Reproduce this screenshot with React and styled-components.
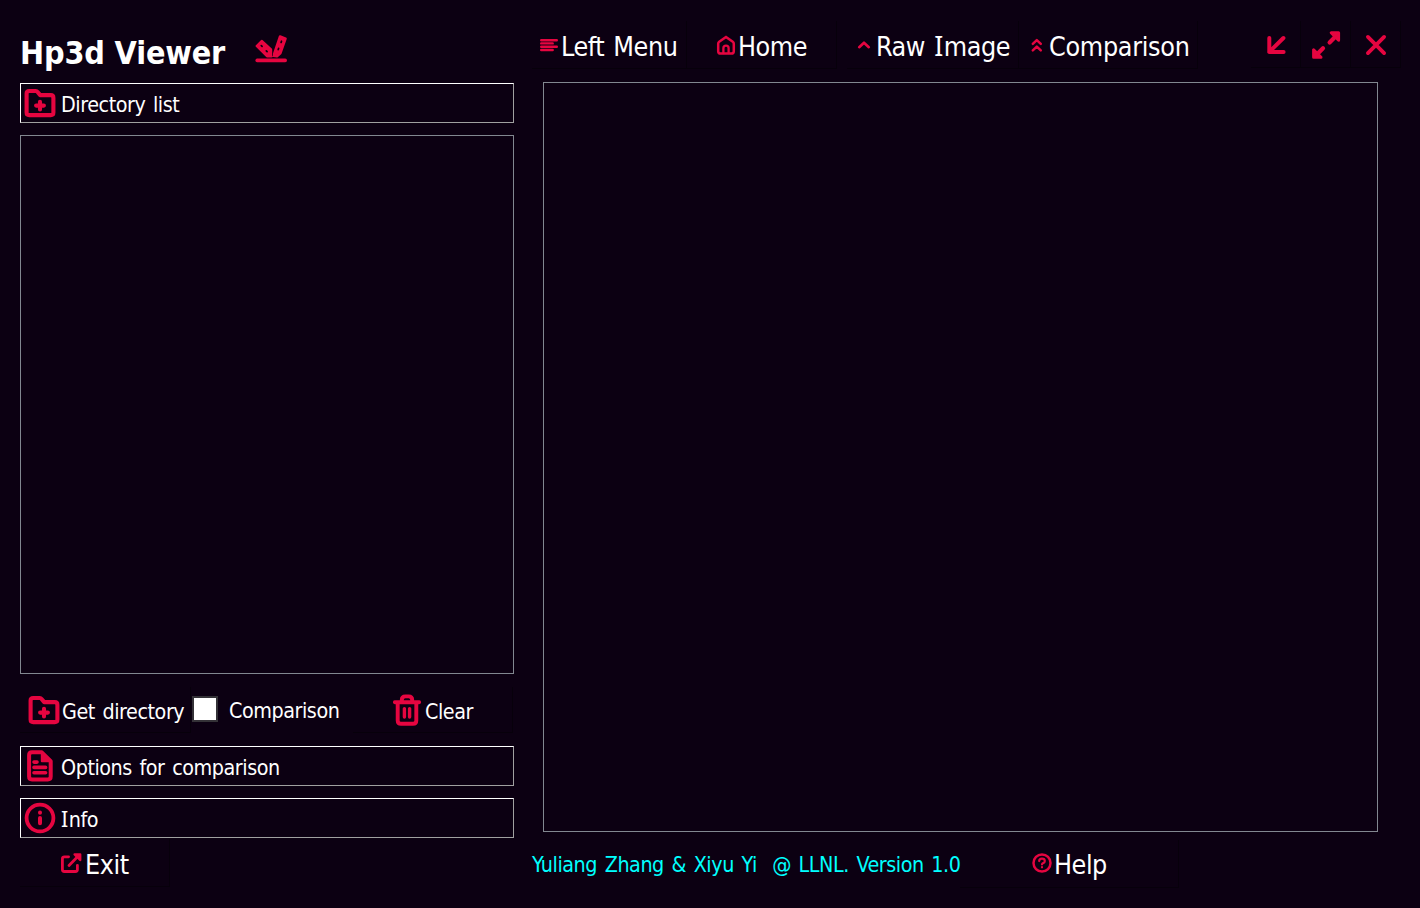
import React from "react";
import styled, { createGlobalStyle } from "styled-components";

const BG = "#0c0012";
const RED = "#e60540";

const GlobalStyle = createGlobalStyle`
  * { box-sizing: border-box; }
  body { margin: 0; background: ${BG}; overflow: hidden; }
`;

const Window = styled.div`
  width: 1420px;
  height: 908px;
  display: flex;
  background: ${BG};
  color: #fff;
  font-family: "DejaVu Sans Condensed", "DejaVu Sans", sans-serif;
  font-stretch: condensed;
  font-size: 21.33px;
`;

const Sidebar = styled.aside`
  width: 494px;
  margin-left: 20px;
  display: flex;
  flex-direction: column;
`;

const Brand = styled.header`
  height: 83px;
  flex: none;
  display: flex;
  align-items: flex-start;
  padding-top: 34px;
`;

const Title = styled.h1`
  width: 234px;
  margin: 0;
  padding-top: 3px;
  font-size: 32px;
  line-height: 33px;
  font-weight: 700;
  letter-spacing: -0.15px;
  white-space: nowrap;
`;

const Tab = styled.button`
  height: 40px;
  flex: none;
  display: flex;
  align-items: center;
  gap: 5px;
  margin: 0 0 ${(p) => (p.$last ? 0 : 12)}px;
  padding: 0 0 0 3px;
  background: none;
  color: inherit;
  font: inherit;
  border: 1px solid;
  border-color: #fff #a0a0a0 #a0a0a0 #fff;
`;

const FileList = styled.div`
  height: 539px;
  flex: none;
  border: 1px solid #828790;
`;

const Actions = styled.div`
  height: 72px;
  flex: none;
  display: flex;
  align-items: flex-start;
  padding-top: 13px;
`;

const ExitRow = styled.div`
  flex: none;
  display: flex;
  padding-top: 1px;
`;

const FlatButton = styled.button`
  width: ${(p) => p.$w}px;
  height: ${(p) => p.$h || 48}px;
  flex: none;
  display: flex;
  align-items: center;
  gap: ${(p) => p.$gap || 0}px;
  margin: 0 0 0 ${(p) => p.$before || 0}px;
  padding: 0 0 0 ${(p) => p.$inset || 0}px;
  background: none;
  color: inherit;
  font: inherit;
  font-size: ${(p) => (p.$large ? 26.67 : 21.33)}px;
  border: 0;
  border-right: 1px solid #07000b;
  border-bottom: 1px solid #07000b;
`;

const Label = styled.span`
  line-height: 30px;
  padding-top: ${(p) => p.$drop ?? 3}px;
  letter-spacing: ${(p) => p.$track ?? -0.45}px;
  word-spacing: 2px;
  white-space: pre;
`;

const SerifI = styled.span`
  font-family: "Noto Sans", sans-serif;
  line-height: 1;
  margin-right: 1px;
`;

const CheckField = styled.label`
  display: flex;
  align-items: center;
  gap: 11px;
  height: 44px;
  width: 161px;
  margin-left: 1px;
`;

const CheckBox = styled.span`
  width: 26px;
  height: 26px;
  background: #fff;
  border: 2px solid #343237;
`;

const Main = styled.main`
  width: 868px;
  margin-left: 18px;
  display: flex;
  flex-direction: column;
`;

const Nav = styled.nav`
  height: 82px;
  display: flex;
  padding-top: 21px;
`;

const Viewer = styled.section`
  width: 835px;
  height: 750px;
  margin-left: 11px;
  border: 1px solid #828790;
`;

const Footer = styled.footer`
  display: flex;
  margin-top: 7px;
  height: 49px;
  align-items: center;
`;

const Credit = styled.div`
  width: 428px;
  padding-top: 2px;
  color: #00ffff;
`;

const Drawing = styled.svg`
  flex: none;
  display: block;
  fill: none;
  stroke: ${RED};
  stroke-width: ${(p) => p.$weight};
  stroke-linecap: round;
  stroke-linejoin: round;
`;

function Icon({ w, h, weight, children }) {
  return (
    <Drawing width={w} height={h} viewBox={`0 0 ${w} ${h}`} $weight={weight}>
      {children}
    </Drawing>
  );
}

const LogoIcon = () => (
  <Icon w={34} h={30} weight={3.2}>
    <path d="M3.2 26.4h28" strokeWidth="3.6" />
    <path d="M2.7 12l5-5L17.5 15.8l0 6.4H13z" fill={RED} strokeWidth="2.4" />
    <path d="M26 2.4l5.6 2.2-5.2 14.8-3.4 2.8-3.6-.4z" fill={RED} strokeWidth="2.4" />
    <path d="M7.3 11.6l.8.8M12.3 16.8l.8.8M27.5 7.2l-.4 1.2M24.6 14.4l-.4 1.2" stroke={BG} strokeWidth="1.7" />
    <path d="M18.5 13v8.5" stroke={BG} strokeWidth=".7" />
  </Icon>
);

const FolderIcon = () => (
  <Icon w={32} h={30} weight={4.1}>
    <path d="M5.2 3h6.6q1.1 0 1.8.9l2.6 3.2h10.6q2.6 0 2.6 2.6v14.8q0 2.6-2.6 2.6H5.2q-2.6 0-2.6-2.6V5.6Q2.6 3 5.2 3z" />
    <path d="M16 13.7v7.8M12.1 17.6h7.8" />
  </Icon>
);

const TrashIcon = () => (
  <Icon w={28} h={32} weight={3.9}>
    <path d="M1.9 8.2h24.2M8.8 7.5V6q0-3.6 3.6-3.6h3.2q3.6 0 3.6 3.6v1.5M4.7 8.5v18q0 3.3 3.3 3.3h12q3.3 0 3.3-3.3v-18" />
    <path d="M11.4 14.6v8.4M16.6 14.6v8.4" strokeWidth="3.4" />
  </Icon>
);

const DocumentIcon = () => (
  <Icon w={32} h={32} weight={4}>
    <path d="M8 2.3h9.8l8.9 8.8v15.5q0 2.9-2.9 2.9H8q-2.9 0-2.9-2.9V5.2q0-2.9 2.9-2.9z" />
    <path d="M17.8 4v7.3h7.6z" fill={RED} strokeWidth="2" />
    <path d="M10 12.1h3M10 17.4h11.6M10 22.8h11.6" strokeWidth="3.6" />
  </Icon>
);

const InfoIcon = () => (
  <Icon w={32} h={32} weight={3.8}>
    <circle cx="16" cy="16" r="13.4" />
    <path d="M16 15.9v5.3M16 10.6v.1" strokeWidth="4" />
  </Icon>
);

const ExitIcon = () => (
  <Icon w={22} h={22} weight={2.8}>
    <path d="M8.6 4.8H4.4q-2 0-2 2v10.7q0 2 2 2h11q2 0 2-2v-4.2" />
    <path d="M9 13.5L18 4.2" />
    <path d="M14.6 2.4h5.6v5.6z" fill={RED} strokeWidth="2.4" />
  </Icon>
);

const HelpIcon = () => (
  <Icon w={20} h={20} weight={2.5}>
    <circle cx="10" cy="10" r="8.5" />
    <path d="M7.2 8.1q0-2.4 2.8-2.4t2.8 2.3q0 1.5-1.6 2.1-1.2.5-1.2 1.4M10 14.2v.1" strokeWidth="2.2" />
  </Icon>
);

const MenuIcon = () => (
  <Icon w={20} h={20} weight={2.4}>
    <path d="M2.2 5.2h15.6M2.2 8.4h11.5M2.2 11.7h15.6M2.2 15h11.5" />
  </Icon>
);

const HomeIcon = () => (
  <Icon w={20} h={20} weight={2.5}>
    <path d="M10 1.9L3.2 6.8q-1 .7-1 2v7.4q0 2.4 2.4 2.4h10.8q2.4 0 2.4-2.4V8.8q0-1.3-1-2z" />
    <path d="M7.4 18v-4.8q0-2.5 2.6-2.5t2.6 2.5V18" strokeWidth="2.3" />
  </Icon>
);

const ChevronIcon = () => (
  <Icon w={14} h={20} weight={2.6}>
    <path d="M2.2 12.2L7 7.7l4.8 4.5" />
  </Icon>
);

const DoubleChevronIcon = () => (
  <Icon w={14} h={20} weight={2.5}>
    <path d="M2.8 8.9l4-3.8 4 3.8M2.8 15.4l4-3.8 4 3.8" />
  </Icon>
);

const MinimizeIcon = () => (
  <Icon w={30} h={30} weight={4}>
    <path d="M22.4 9L8.3 22.9M8.3 9v13.9H22.6" />
  </Icon>
);

const ExpandIcon = () => (
  <Icon w={30} h={30} weight={4.2}>
    <path d="M18.6 13.4L26 6M12 19.2L4.8 26.4" />
    <path d="M20.2 3.8h7.4v7.4zM2.6 20.8v7.4H10z" fill={RED} strokeWidth="3" />
  </Icon>
);

const CloseIcon = () => (
  <Icon w={30} h={30} weight={3.8}>
    <path d="M6.9 7.9l16.2 16.2M23.1 7.9L6.9 24.1" />
  </Icon>
);

export default function App() {
  return (
    <>
      <GlobalStyle />
      <Window>
        <Sidebar>
          <Brand>
            <Title>Hp3d Viewer</Title>
            <LogoIcon />
          </Brand>
          <Tab>
            <FolderIcon />
            <Label>Directory list</Label>
          </Tab>
          <FileList />
          <Actions>
            <FlatButton $w={171} $h={46} $inset={8} $gap={2}>
              <FolderIcon />
              <Label $drop={5}>Get directory</Label>
            </FlatButton>
            <CheckField>
              <CheckBox />
              <Label>Comparison</Label>
            </CheckField>
            <FlatButton $w={160} $h={46} $inset={40} $gap={4}>
              <TrashIcon />
              <Label $drop={5}>Clear</Label>
            </FlatButton>
          </Actions>
          <Tab>
            <DocumentIcon />
            <Label>Options for comparison</Label>
          </Tab>
          <Tab $last>
            <InfoIcon />
            <Label><SerifI>I</SerifI>nfo</Label>
          </Tab>
          <ExitRow>
            <FlatButton $large $w={150} $inset={40} $gap={3}>
              <ExitIcon />
              <Label $drop={4}>Exit</Label>
            </FlatButton>
          </ExitRow>
        </Sidebar>
        <Main>
          <Nav>
            <FlatButton $large $w={155} $inset={7} $gap={2}>
              <MenuIcon />
              <Label $drop={4}>Left Menu</Label>
            </FlatButton>
            <FlatButton $large $w={150} $inset={29} $gap={2}>
              <HomeIcon />
              <Label $drop={4}>Home</Label>
            </FlatButton>
            <FlatButton $large $w={172} $before={10} $inset={10} $gap={5}>
              <ChevronIcon />
              <Label $drop={4}>Raw <SerifI>I</SerifI>mage</Label>
            </FlatButton>
            <FlatButton $large $w={179} $inset={11} $gap={5}>
              <DoubleChevronIcon />
              <Label $drop={4} $track={-0.3}>Comparison</Label>
            </FlatButton>
            <FlatButton $w={50} $h={47} $before={53} $inset={10}>
              <MinimizeIcon />
            </FlatButton>
            <FlatButton $w={50} $h={47} $inset={10}>
              <ExpandIcon />
            </FlatButton>
            <FlatButton $w={50} $h={47} $inset={10}>
              <CloseIcon />
            </FlatButton>
          </Nav>
          <Viewer />
          <Footer>
            <Credit>
              <Label>{"Yuliang Zhang & Xiyu Yi  @ LLNL. Version 1.0"}</Label>
            </Credit>
            <FlatButton $large $w={219} $inset={72} $gap={2}>
              <HelpIcon />
              <Label $drop={4}>Help</Label>
            </FlatButton>
          </Footer>
        </Main>
      </Window>
    </>
  );
}
